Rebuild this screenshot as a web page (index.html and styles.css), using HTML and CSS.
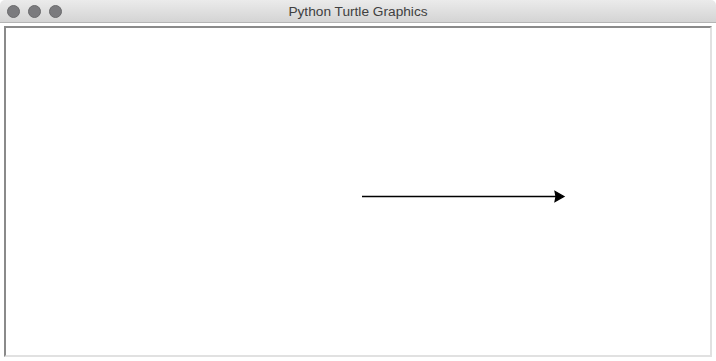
FILE: index.html
```html
<!DOCTYPE html>
<html lang="en">
<head>
    <meta charset="UTF-8">
    <meta name="viewport" content="width=device-width, initial-scale=1.0">
    <title>Python Turtle Graphics</title>
    <link rel="stylesheet" href="styles.css">
</head>
<body>

    <div class="window">
        <div class="titlebar">
            <div class="lights">
                <span class="light"></span>
                <span class="light"></span>
                <span class="light"></span>
            </div>
            <div class="title">Python Turtle Graphics</div>
        </div>

        <div class="content">
            <div class="canvas">
                <svg class="drawing" viewBox="0 0 704 327" width="704" height="327">
                    <line x1="356" y1="168.5" x2="551" y2="168.5" stroke="#000" stroke-width="1.5"/>
                    <polygon points="558,168.5 549,163.5 550,168.5 549,173.5" fill="#000" stroke="#000" stroke-width="1.2"/>
                </svg>
            </div>
        </div>
    </div>

</body>
</html>
```

FILE: styles.css
```css
html, body {
    margin: 0;
    padding: 0;
    background-color: #ffffff;
}

body {
    font-family: "Liberation Sans", Arial, sans-serif;
    width: 716px;
    height: 361px;
    overflow: hidden;
}

.window {
    display: flex;
    flex-direction: column;
    height: 100%;
}

.titlebar {
    position: relative;
    height: 22px;
    border-bottom: 1px solid #b4b4b4;
    border-radius: 5px 5px 0 0;
    background: linear-gradient(to bottom, #ebebeb, #d4d4d4);
    display: flex;
    align-items: center;
    justify-content: center;
}

.lights {
    position: absolute;
    left: 7px;
    top: 5px;
    display: flex;
    gap: 8px;
}

.light {
    width: 11px;
    height: 11px;
    border-radius: 50%;
    background-color: #7b7b7e;
    border: 1px solid #6a6a6c;
}

.title {
    font-size: 13.7px;
    color: #404040;
    padding-top: 1px;
}

.content {
    padding: 3px 4px 4px 4px;
}

.canvas {
    width: 704px;
    height: 327px;
    border-top: 2px solid #8a8a8a;
    border-left: 2px solid #8a8a8a;
    border-right: 2px solid #e1e1e1;
    border-bottom: 2px solid #e1e1e1;
    background-color: #ffffff;
}

.drawing {
    display: block;
}
```
